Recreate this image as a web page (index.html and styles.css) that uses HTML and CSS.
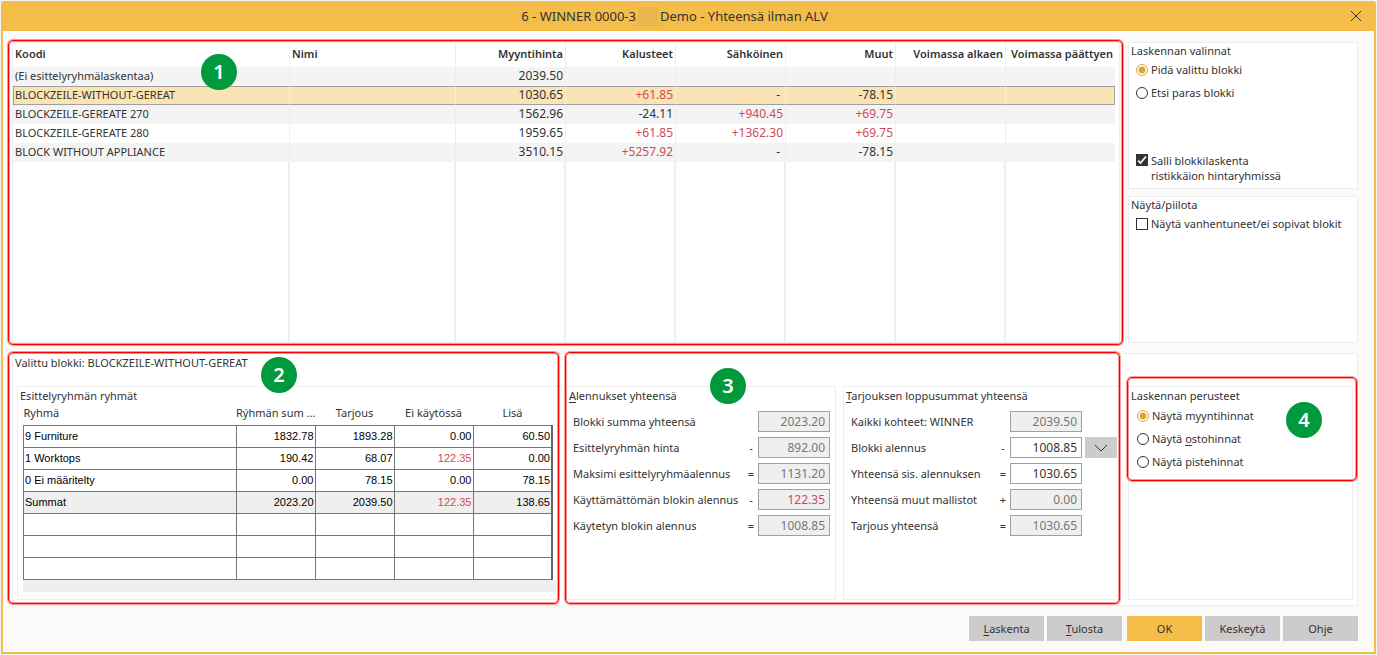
FILE: index.html
```html
<!DOCTYPE html>
<html lang="fi">
<head>
<meta charset="utf-8">
<title>Yhteensä ilman ALV</title>
<link rel="stylesheet" href="styles.css">
</head>
<body>
<div class="window">
  <header class="titlebar">
    <h1 class="title"><span>6 - WINNER 0000-3</span><span class="redacted"></span><span>Demo - Yhteensä ilman ALV</span></h1>
    <button class="close" type="button" aria-label="Sulje">
      <svg width="12" height="12" viewBox="0 0 12 12"><path d="M1 1L11 11M11 1L1 11" fill="none" stroke="#333" stroke-width="1"/></svg>
    </button>
  </header>

  <main class="content">
    <section class="top">
      <div class="panel blocks">
        <table class="block-table">
          <colgroup><col><col class="c-name"><col class="c-num"><col class="c-num"><col class="c-num"><col class="c-num"><col class="c-num"><col class="c-last"></colgroup>
          <thead>
            <tr><th class="txt">Koodi</th><th class="txt">Nimi</th><th>Myyntihinta</th><th>Kalusteet</th><th>Sähköinen</th><th>Muut</th><th>Voimassa alkaen</th><th>Voimassa päättyen</th></tr>
          </thead>
          <tbody>
            <tr class="odd"><td class="txt">(Ei esittelyryhmälaskentaa)</td><td></td><td>2039.50</td><td></td><td></td><td></td><td></td><td></td></tr>
            <tr class="selected"><td class="txt">BLOCKZEILE-WITHOUT-GEREAT</td><td></td><td>1030.65</td><td class="red">+61.85</td><td class="dash">-</td><td>-78.15</td><td></td><td></td></tr>
            <tr class="odd"><td class="txt">BLOCKZEILE-GEREATE 270</td><td></td><td>1562.96</td><td>-24.11</td><td class="red">+940.45</td><td class="red">+69.75</td><td></td><td></td></tr>
            <tr><td class="txt">BLOCKZEILE-GEREATE 280</td><td></td><td>1959.65</td><td class="red">+61.85</td><td class="red">+1362.30</td><td class="red">+69.75</td><td></td><td></td></tr>
            <tr class="odd"><td class="txt">BLOCK WITHOUT APPLIANCE</td><td></td><td>3510.15</td><td class="red">+5257.92</td><td class="dash">-</td><td>-78.15</td><td></td><td></td></tr>
            <tr class="filler"><td></td><td></td><td></td><td></td><td></td><td></td><td></td><td></td></tr>
          </tbody>
        </table>
        <div class="mark mark-1"></div>
        <span class="badge badge-1">1</span>
      </div>

      <div class="side">
        <fieldset class="panel options">
          <legend>Laskennan valinnat</legend>
          <label class="choice"><input type="radio" name="mode" checked><span>Pidä valittu blokki</span></label>
          <label class="choice"><input type="radio" name="mode"><span>Etsi paras blokki</span></label>
          <label class="choice two-line"><input type="checkbox" checked><span>Salli blokkilaskenta<br>ristikkäion hintaryhmissä</span></label>
        </fieldset>
        <fieldset class="panel options">
          <legend>Näytä/piilota</legend>
          <label class="choice"><input type="checkbox"><span>Näytä vanhentuneet/ei sopivat blokit</span></label>
        </fieldset>
      </div>
    </section>

    <section class="panel bottom">
      <h2 class="chosen">Valittu blokki: BLOCKZEILE-WITHOUT-GEREAT</h2>
      <div class="groups">
        <div class="group open">
          <h3 class="group-title">Esittelyryhmän ryhmät</h3>
          <div class="sheet">
            <table class="group-table">
              <colgroup><col><col class="g-num"><col class="g-num"><col class="g-num"><col class="g-num"></colgroup>
              <thead><tr><th class="txt">Ryhmä</th><th>Rýhmän sum ...</th><th>Tarjous</th><th>Ei käytössä</th><th>Lisä</th></tr></thead>
              <tbody>
                <tr><td class="txt">9 Furniture</td><td>1832.78</td><td>1893.28</td><td>0.00</td><td>60.50</td></tr>
                <tr><td class="txt">1 Worktops</td><td>190.42</td><td>68.07</td><td class="red">122.35</td><td>0.00</td></tr>
                <tr><td class="txt">0 Ei määritelty</td><td>0.00</td><td>78.15</td><td>0.00</td><td>78.15</td></tr>
                <tr class="sum"><td class="txt">Summat</td><td>2023.20</td><td>2039.50</td><td class="red">122.35</td><td>138.65</td></tr>
                <tr><td></td><td></td><td></td><td></td><td></td></tr>
                <tr><td></td><td></td><td></td><td></td><td></td></tr>
                <tr><td></td><td></td><td></td><td></td><td></td></tr>
              </tbody>
            </table>
            <div class="sheet-foot"></div>
          </div>
        </div>

        <div class="group">
          <h3 class="group-title"><u>A</u>lennukset yhteensä</h3>
          <div class="form">
            <label for="a1">Blokki summa yhteensä</label><span></span><input id="a1" value="2023.20" readonly>
            <label for="a2">Esittelyryhmän hinta</label><span>-</span><input id="a2" value="892.00" readonly>
            <label for="a3">Maksimi esittelyryhmäalennus</label><span>=</span><input id="a3" value="1131.20" readonly>
            <label for="a4">Käyttämättömän blokin alennus</label><span>-</span><input id="a4" class="red" value="122.35" readonly>
            <label for="a5">Käytetyn blokin alennus</label><span>=</span><input id="a5" value="1008.85" readonly>
          </div>
        </div>

        <div class="group open">
          <h3 class="group-title"><u>T</u>arjouksen loppusummat yhteensä</h3>
          <div class="form wide">
            <label for="t1">Kaikki kohteet: WINNER</label><span></span><input id="t1" value="2039.50" readonly><i></i>
            <label for="t2">Blokki alennus</label><span>-</span><input id="t2" value="1008.85"><button class="drop" type="button" aria-label="Valitse alennus"><svg width="14" height="8" viewBox="0 0 14 8"><path d="M1 1L7 7L13 1" fill="none" stroke="#333" stroke-width="1"/></svg></button>
            <label for="t3">Yhteensä sis. alennuksen</label><span>=</span><input id="t3" value="1030.65"><i></i>
            <label for="t4">Yhteensä muut mallistot</label><span>+</span><input id="t4" value="0.00" readonly><i></i>
            <label for="t5">Tarjous yhteensä</label><span>=</span><input id="t5" value="1030.65" readonly><i></i>
          </div>
        </div>

        <fieldset class="group options basis">
          <legend>Laskennan perusteet</legend>
          <label class="choice"><input type="radio" name="basis" checked><span>Näytä myyntihinnat</span></label>
          <label class="choice"><input type="radio" name="basis"><span>Näytä <u>o</u>stohinnat</span></label>
          <label class="choice"><input type="radio" name="basis"><span>Näytä pistehinnat</span></label>
          <div class="mark mark-4"></div>
          <span class="badge badge-4">4</span>
        </fieldset>
      </div>
      <div class="mark mark-2"></div>
      <span class="badge badge-2">2</span>
      <div class="mark mark-3"></div>
      <span class="badge badge-3">3</span>
    </section>

    <footer class="actions">
      <button class="btn" type="button"><u>L</u>askenta</button>
      <button class="btn" type="button"><u>T</u>ulosta</button>
      <button class="btn primary" type="button">OK</button>
      <button class="btn" type="button">Keskeytä</button>
      <button class="btn" type="button">Ohje</button>
    </footer>
  </main>
</div>
</body>
</html>
```

FILE: styles.css
```css
* { box-sizing: border-box; }

body {
  margin: 0;
  background: #f4f4f4;
  color: #333;
  font: 11px/15px "Noto Sans", "Open Sans", sans-serif;
}

h1, h2, h3 { margin: 0; font-size: inherit; font-weight: 400; }
button, input { font: inherit; color: inherit; }
u { text-underline-offset: 2px; }

.window {
  display: flex;
  flex-direction: column;
  min-height: calc(100vh - 2px);
  margin: 1px;
  border: 2px solid #f4bd49;
  border-radius: 3px 3px 0 0;
  background: #fafafa;
}

/* Title bar */
.titlebar { display: flex; align-items: center; height: 28px; padding: 0 4px 2px; background: #f4bd49; }
.title { flex: 1; display: flex; justify-content: center; align-items: center; font-size: 13px; line-height: 20px; }
.redacted { width: 20px; height: 19px; margin: 0 2px; background: #e9b64b; }
.close { display: grid; place-items: center; width: 28px; height: 24px; padding: 0; border: 0; background: none; }

/* Page frame */
.content {
  flex: 1;
  display: grid;
  grid-template-rows: minmax(auto, 301fr) minmax(auto, 253fr) auto;
  gap: 10px;
  padding: 11px 16px 11px 9px;
}
.panel { position: relative; border: 1px solid #eee; background: #fff; }
.top { display: grid; grid-template-columns: minmax(0, 1fr) 230px; gap: 8px; }
.side { display: grid; grid-template-rows: 147fr 147fr; gap: 7px; }

/* Block list */
.blocks { padding-right: 4px; }
.block-table { width: 100%; height: 100%; table-layout: fixed; border-collapse: separate; border-spacing: 0; }
.c-name { width: 166px; }
.c-num { width: 110px; }
.c-last { width: 109px; }
.block-table th, .block-table td { padding: 0 2px 2px; border-right: 1px solid #eee; text-align: right; white-space: nowrap; }
.block-table th { height: 24px; padding-bottom: 3px; font-weight: 600; }
.block-table td { height: 19px; font-size: 12px; }
.block-table th:last-child, .block-table td:last-child { border-right: 0; }
.block-table .txt { font-size: 11px; text-align: left; }
.block-table .dash { padding-right: 5px; }
.odd td { background: #f4f4f4; }
.block-table .selected td { background: #fae4b4; border-top: 1px solid #a0a0a0; border-bottom: 1px solid #a0a0a0; }
.block-table .selected td:first-child { border-left: 1px solid #a0a0a0; padding-left: 1px; }
.block-table .selected td:last-child { border-right: 1px solid #a0a0a0; }
.block-table .filler td { height: auto; border-right: 2px solid #e8effb; }
.block-table .filler td:last-child { border-right: 0; }
.red { color: #d04a5c; }

/* Radio and tick boxes */
fieldset { min-width: 0; margin: 0; padding: 0; }
.options { padding: 0 2px; }
.options legend { float: left; width: 100%; padding: 0; line-height: 15px; }
.choice { clear: both; display: flex; gap: 3px; align-items: center; height: 15px; margin-bottom: 8px; padding-left: 5px; }
.choice:last-child { margin-bottom: 0; }
.options legend + .choice { padding-top: 4px; height: 19px; }
.choice input { appearance: none; flex: none; width: 12px; height: 12px; margin: 0; border: 1px solid #333; background: #fff; }
.choice input[type="radio"] { border-radius: 50%; }
.choice input[type="radio"]:checked { border-color: #dca73a; background: radial-gradient(circle, #dca73a 3px, #fff 4px); }
.choice input[type="checkbox"]:checked {
  background: #333 url("data:image/svg+xml,%3Csvg xmlns='http://www.w3.org/2000/svg' viewBox='0 0 10 10'%3E%3Cpath d='M1 5.5L3.5 8L9 1.5' fill='none' stroke='%23fff' stroke-width='1.7'/%3E%3C/svg%3E");
}
.two-line { align-items: flex-start; height: auto; margin-top: 53px; }
.two-line input { margin-top: 1px; }

/* Lower panel */
.bottom { display: flex; flex-direction: column; padding: 1px 4px 5px 2px; }
.chosen { height: 31px; }
.groups {
  flex: 1;
  display: grid;
  grid-template-columns: minmax(0, 1fr) 270px 278px 225px;
  gap: 7px;
  padding-left: 2px;
}
.group { position: relative; border: 1px solid #eee; padding: 1px 2px; }
.group.open { border-right: 0; }
.group-title { line-height: 15px; }
.basis legend { line-height: 16px; }
.basis .choice { padding-left: 6px; }

.sheet { margin: 0 1px 0 3px; }
.group-table { width: calc(100% - 3px); table-layout: fixed; border-collapse: collapse; }
.g-num { width: 79px; }
.group-table th { height: 22px; padding: 0 0 2px; font-weight: 400; white-space: nowrap; }
.group-table td { height: 22px; padding: 0 1px; border: 1px solid #777; color: #000; font: 11px/15px "Liberation Sans", sans-serif; text-align: right; }
.group-table td.red { color: #d04a5c; }
.group-table .txt { text-align: left; }
.group-table td:last-child { border-right: 2px solid #666; }
.group-table .sum td { background: #efefef; }
.sheet-foot { height: 12px; background: #efefef; }

.form { display: grid; grid-template-columns: 1fr 8px 72px; align-items: center; column-gap: 3px; row-gap: 5px; margin-top: 8px; padding: 0 3px 0 4px; }
.form.wide { grid-template-columns: 1fr 8px 72px 32px; padding: 0 2px 0 5px; }
.form span { text-align: center; }
.form input { width: 100%; height: 21px; padding: 0 4px; border: 1px solid #a0a0a0; border-radius: 0; background: #fff; font-size: 12px; text-align: right; }
.form input:read-only { background: #efefef; color: #777; }
.form input.red { color: #d04a5c; }
.drop { display: grid; place-items: center; height: 21px; padding: 0; border: 0; background: #ccc; }

/* Buttons */
.actions { display: flex; justify-content: flex-end; gap: 3px; }
.btn { width: 75px; height: 25px; padding: 0; border: 0; background: #ccc; }
.btn.primary { margin-left: 2px; background: #f4bd49; }

/* Numbered callouts over the dialog */
.mark {
  position: absolute;
  border: 1px solid #f00;
  border-radius: 5px;
  box-shadow: 0 0 0 1px rgba(255, 0, 0, .4), inset 0 0 0 1px rgba(255, 0, 0, .4);
  pointer-events: none;
}
.mark-1 { inset: -3px -4px -3px -5px; }
.mark-2 { top: -2px; bottom: 1px; left: -5px; width: 551px; }
.mark-3 { top: -2px; bottom: 1px; right: 237px; width: 555px; }
.mark-4 { top: -10px; left: -2px; right: -5px; height: 104px; }
.badge {
  position: absolute;
  display: grid;
  place-items: center;
  width: 36px;
  height: 36px;
  border-radius: 50%;
  background: #009a3d;
  color: #fff;
  font-size: 20px;
  line-height: 24px;
  font-weight: 600;
}
.badge-1 { top: 11px; left: 188px; }
.badge-2 { top: 3px; left: 248px; }
.badge-3 { top: 14px; right: 611px; }
.badge-4 { top: 15px; right: 30px; }
```
